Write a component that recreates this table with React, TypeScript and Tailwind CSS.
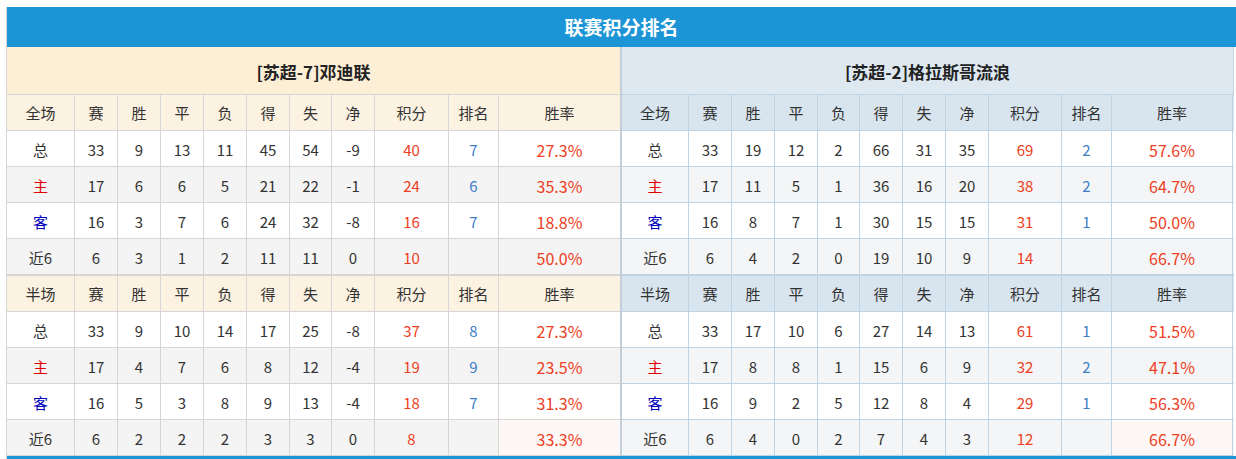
import React from "react";

type Row = {
  label: string;
  vals: (string | number)[];
  pts: number;
  rank: number | "";
  rate: string;
};

type Side = "home" | "away";

const FONT = { fontFamily: '"Noto Sans CJK SC", "Noto Sans", sans-serif' };

const leftWidths = [
  "w-[68px]",
  "w-[43px]",
  "w-[43px]",
  "w-[43px]",
  "w-[43px]",
  "w-[43px]",
  "w-[42px]",
  "w-[43px]",
  "w-[74px]",
  "w-[50px]",
  "w-[121px]",
];

const rightWidths = [
  "w-[67px]",
  "w-[43px]",
  "w-[43px]",
  "w-[43px]",
  "w-[42px]",
  "w-[43px]",
  "w-[43px]",
  "w-[43px]",
  "w-[73px]",
  "w-[50px]",
  "w-[121px]",
];

const headers = ["赛", "胜", "平", "负", "得", "失", "净", "积分", "排名", "胜率"];

const homeFull: Row[] = [
  { label: "总", vals: [33, 9, 13, 11, 45, 54, -9], pts: 40, rank: 7, rate: "27.3%" },
  { label: "主", vals: [17, 6, 6, 5, 21, 22, -1], pts: 24, rank: 6, rate: "35.3%" },
  { label: "客", vals: [16, 3, 7, 6, 24, 32, -8], pts: 16, rank: 7, rate: "18.8%" },
  { label: "近6", vals: [6, 3, 1, 2, 11, 11, 0], pts: 10, rank: "", rate: "50.0%" },
];

const homeHalf: Row[] = [
  { label: "总", vals: [33, 9, 10, 14, 17, 25, -8], pts: 37, rank: 8, rate: "27.3%" },
  { label: "主", vals: [17, 4, 7, 6, 8, 12, -4], pts: 19, rank: 9, rate: "23.5%" },
  { label: "客", vals: [16, 5, 3, 8, 9, 13, -4], pts: 18, rank: 7, rate: "31.3%" },
  { label: "近6", vals: [6, 2, 2, 2, 3, 3, 0], pts: 8, rank: "", rate: "33.3%" },
];

const awayFull: Row[] = [
  { label: "总", vals: [33, 19, 12, 2, 66, 31, 35], pts: 69, rank: 2, rate: "57.6%" },
  { label: "主", vals: [17, 11, 5, 1, 36, 16, 20], pts: 38, rank: 2, rate: "64.7%" },
  { label: "客", vals: [16, 8, 7, 1, 30, 15, 15], pts: 31, rank: 1, rate: "50.0%" },
  { label: "近6", vals: [6, 4, 2, 0, 19, 10, 9], pts: 14, rank: "", rate: "66.7%" },
];

const awayHalf: Row[] = [
  { label: "总", vals: [33, 17, 10, 6, 27, 14, 13], pts: 61, rank: 1, rate: "51.5%" },
  { label: "主", vals: [17, 8, 8, 1, 15, 6, 9], pts: 32, rank: 2, rate: "47.1%" },
  { label: "客", vals: [16, 9, 2, 5, 12, 8, 4], pts: 29, rank: 1, rate: "56.3%" },
  { label: "近6", vals: [6, 4, 0, 2, 7, 4, 3], pts: 12, rank: "", rate: "66.7%" },
];

function labelColor(label: string) {
  if (label === "主") return "text-[#e00000]";
  if (label === "客") return "text-[#0000b8]";
  return "text-[#333333]";
}

function HeaderRow({ side, first }: { side: Side; first: string }) {
  const widths = side === "home" ? leftWidths : rightWidths;
  const bg = side === "home" ? "bg-[#fcf2e1]" : "bg-[#d8e4ee]";
  const border = side === "home" ? "border-[#d6d6d6]" : "border-[#bfd3e2]";
  const cells = [first, ...headers];
  return (
    <div className={`flex h-[36px] border-b ${border} ${bg} text-[#333333]`}>
      {cells.map((c, i) => (
        <div
          key={c}
          className={`${widths[i]} flex shrink-0 items-center justify-center pt-[2px] ${border} ${
            i < cells.length - 1 || side === "away" ? "border-r" : ""
          }`}
        >
          {c}
        </div>
      ))}
    </div>
  );
}

function DataRow({ row, side, idx, last }: { row: Row; side: Side; idx: number; last: boolean }) {
  const widths = side === "home" ? leftWidths : rightWidths;
  const border = side === "home" ? "border-[#d6d6d6]" : "border-[#bfd3e2]";
  const gray = idx % 2 === 1;
  const rowBg = gray ? (side === "home" ? "bg-[#f4f4f4]" : "bg-[#f3f5f6]") : "bg-white";
  const sep = idx === 3 && !last ? "h-[37px] border-b-2" : "h-[36px] border-b";
  const cellBase = `flex shrink-0 items-center justify-center pt-[3px] ${border}`;
  return (
    <div className={`flex ${sep} ${border} ${rowBg}`}>
      <div className={`${widths[0]} ${cellBase} border-r ${labelColor(row.label)}`}>
        {row.label}
      </div>
      {row.vals.map((v, i) => (
        <div key={i} className={`${widths[i + 1]} ${cellBase} border-r text-[#333333]`}>
          {v}
        </div>
      ))}
      <div className={`${widths[8]} ${cellBase} border-r text-[#ee3d22]`}>{row.pts}</div>
      <div className={`${widths[9]} ${cellBase} border-r text-[#3b7fc6]`}>{row.rank}</div>
      <div
        className={`${widths[10]} ${cellBase} ${side === "away" ? "border-r" : ""} text-[16px] text-[#ee3d22] ${
          last && idx === 3 ? "bg-[#fdf8f6]" : ""
        }`}
      >
        {row.rate}
      </div>
    </div>
  );
}

function TeamTable({
  side,
  name,
  full,
  half,
}: {
  side: Side;
  name: string;
  full: Row[];
  half: Row[];
}) {
  const isHome = side === "home";
  return (
    <div
      className={
        isHome
          ? "w-[615px] shrink-0 border-r-2 border-[#c3cfd8]"
          : "w-[612px] shrink-0"
      }
    >
      <div
        className={`flex h-[48px] items-center justify-center border-b pt-[2px] text-[17px] font-bold text-[#222222] ${
          isHome ? "border-[#d6d6d6] bg-[#fdefd5]" : "border-[#bfd3e2] border-r bg-[#dde8f0]"
        }`}
      >
        {name}
      </div>
      <HeaderRow side={side} first="全场" />
      {full.map((r, i) => (
        <DataRow key={`f${i}`} row={r} side={side} idx={i} last={false} />
      ))}
      <HeaderRow side={side} first="半场" />
      {half.map((r, i) => (
        <DataRow key={`h${i}`} row={r} side={side} idx={i} last={true} />
      ))}
    </div>
  );
}

export default function App() {
  return (
    <div className="bg-white pl-[6px] pt-[7px] text-[15px]" style={FONT}>
      <div className="w-[1230px] border-l border-[#d6d6d6]">
        <div className="flex h-[40px] items-center justify-center bg-[#1c95d6] text-[19px] font-bold text-white">
          联赛积分排名
        </div>
        <div className="flex">
          <TeamTable side="home" name="[苏超-7]邓迪联" full={homeFull} half={homeHalf} />
          <TeamTable side="away" name="[苏超-2]格拉斯哥流浪" full={awayFull} half={awayHalf} />
        </div>
        <div className="h-[3px] bg-[#1c95d6]" />
      </div>
    </div>
  );
}
